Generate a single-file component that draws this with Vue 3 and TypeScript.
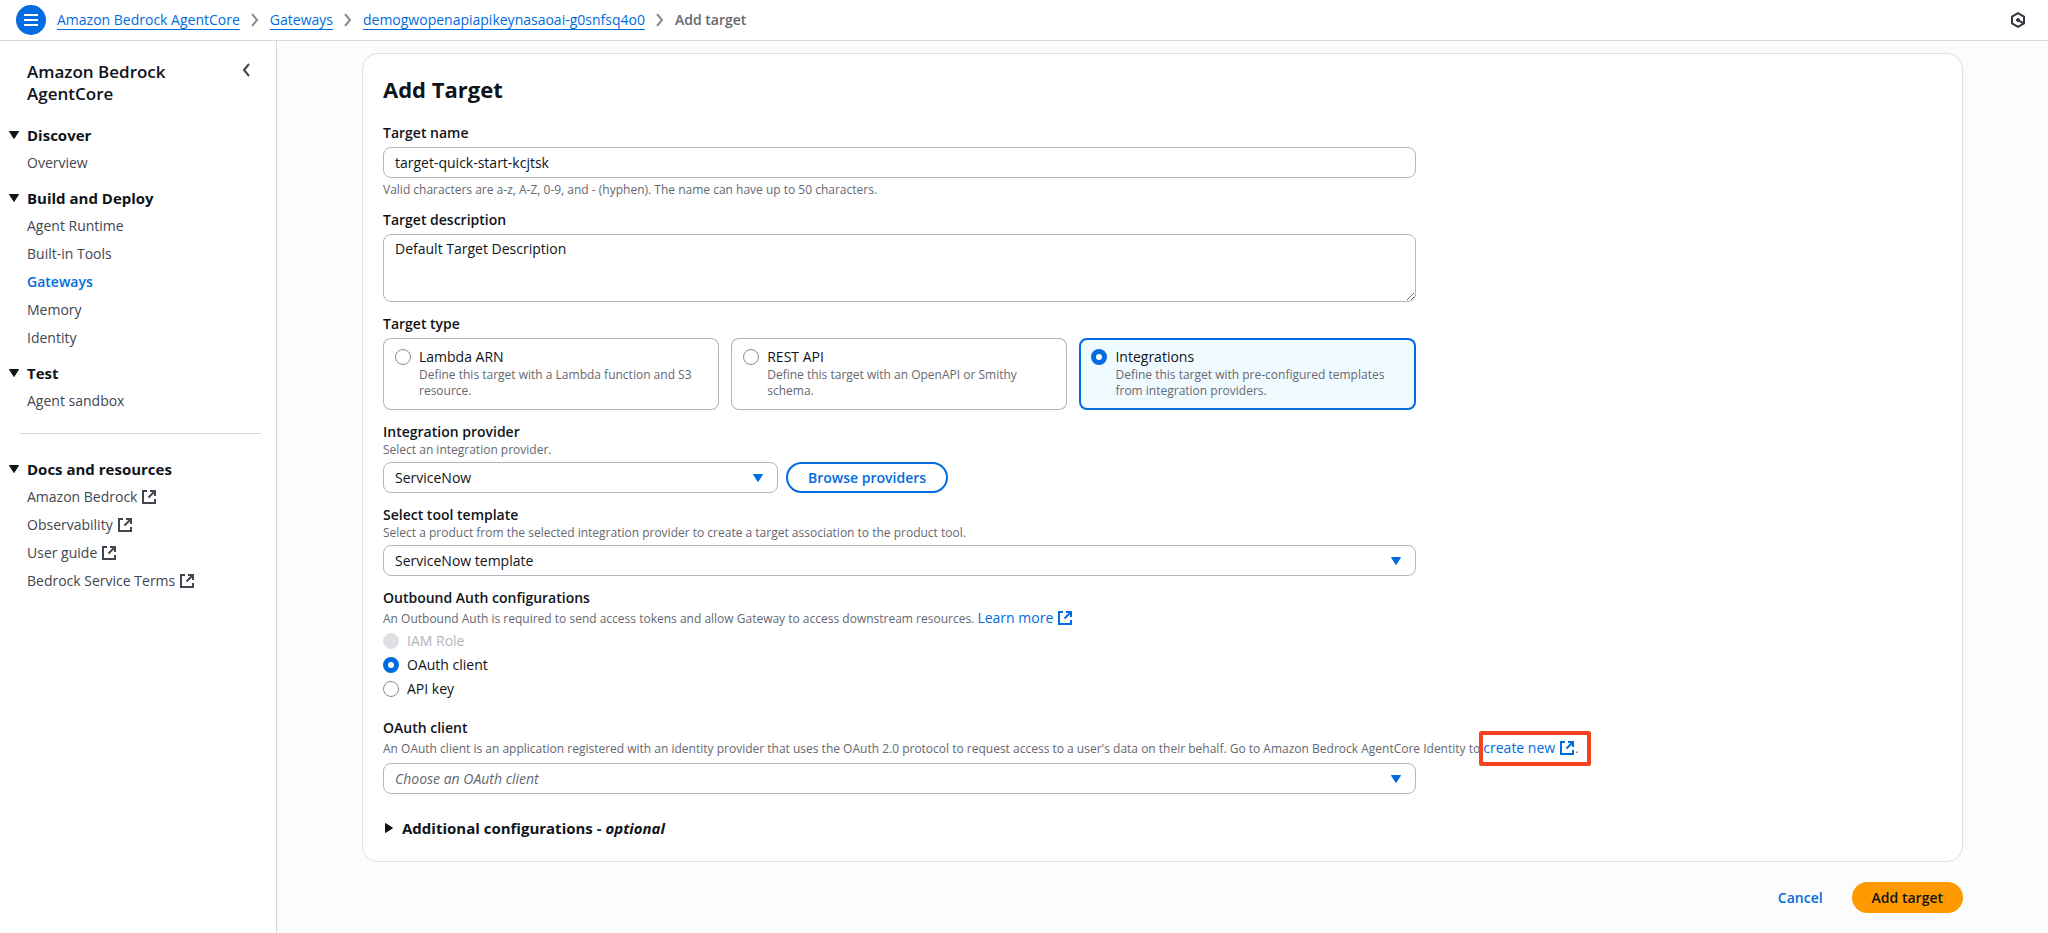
<script setup lang="ts">
import { ref, h } from 'vue'

interface NavItem { label: string; external?: boolean; active?: boolean }
interface NavSection { title: string; items: NavItem[] }

const mainSections: NavSection[] = [
  { title: 'Discover', items: [{ label: 'Overview' }] },
  {
    title: 'Build and Deploy',
    items: [
      { label: 'Agent Runtime' },
      { label: 'Built-in Tools' },
      { label: 'Gateways', active: true },
      { label: 'Memory' },
      { label: 'Identity' },
    ],
  },
  { title: 'Test', items: [{ label: 'Agent sandbox' }] },
]
const docSections: NavSection[] = [
  {
    title: 'Docs and resources',
    items: [
      { label: 'Amazon Bedrock', external: true },
      { label: 'Observability', external: true },
      { label: 'User guide', external: true },
      { label: 'Bedrock Service Terms', external: true },
    ],
  },
]
const navGroups = [mainSections, docSections]

const crumbs = ['Amazon Bedrock AgentCore', 'Gateways', 'demogwopenapiapikeynasaoai-g0snfsq4o0']

const targetTypes = [
  { id: 'lambda', title: 'Lambda ARN', text: 'Define this target with a Lambda function and S3 resource.' },
  { id: 'rest', title: 'REST API', text: 'Define this target with an OpenAPI or Smithy schema.' },
  { id: 'integrations', title: 'Integrations', text: 'Define this target with pre-configured templates from integration providers.' },
]
const authTypes = [
  { id: 'iam', label: 'IAM Role', disabled: true },
  { id: 'oauth', label: 'OAuth client', disabled: false },
  { id: 'apikey', label: 'API key', disabled: false },
]

const targetName = ref('target-quick-start-kcjtsk')
const description = ref('Default Target Description')
const targetType = ref('integrations')
const authType = ref('oauth')
const provider = ref('ServiceNow')
const template = ref('ServiceNow template')
const oauthClient = ref('')

const ExternalIcon = () =>
  h('svg', { viewBox: '0 0 16 16', width: 16, height: 16, fill: 'none', stroke: 'currentColor', 'stroke-width': 2, 'aria-hidden': 'true' }, [
    h('path', { d: 'M6 2H2v12h12v-4' }),
    h('path', { d: 'M9 2h5v5M14 2 7.500 8.500' }),
  ])
const CaretDown = () =>
  h('svg', { viewBox: '0 0 10 8', width: 10, height: 8, fill: 'currentColor', stroke: 'currentColor', 'stroke-width': 1, 'stroke-linejoin': 'round', 'aria-hidden': 'true' }, [
    h('path', { d: 'M.5.5h9L5 7.500z' }),
  ])
</script>

<template>
  <div class="page">
    <header class="topbar">
      <button class="menu" type="button" aria-label="Open menu">
        <svg viewBox="0 0 16 16" width="16" height="16" fill="none" stroke="currentColor" stroke-width="2"><path d="M1 3h14M1 8h14M1 13h14" /></svg>
      </button>
      <nav class="crumbs" aria-label="Breadcrumb">
        <template v-for="c in crumbs" :key="c">
          <a href="#">{{ c }}</a>
          <svg class="sep" viewBox="0 0 8 14" width="8" height="14" fill="none" stroke="currentColor" stroke-width="2"><path d="M1 1l5 6-5 6" /></svg>
        </template>
        <span class="current">Add target</span>
      </nav>
      <button class="assist" type="button" aria-label="Assistant">
        <svg viewBox="0 0 16 16" width="16" height="16" fill="none" stroke="currentColor" stroke-width="2">
          <path d="M8 1.200 14 4.600v6.800L8 14.800 2 11.400V4.600z" stroke-linejoin="round" />
          <path d="M8 8l5.500 3.300" />
          <circle cx="8" cy="8" r="1.500" fill="currentColor" stroke-width="1" />
        </svg>
      </button>
    </header>

    <div class="body">
      <aside class="sidebar">
        <div class="side-head">
          <h2>Amazon Bedrock AgentCore</h2>
          <button class="collapse" type="button" aria-label="Collapse navigation">
            <svg viewBox="0 0 8 14" width="8" height="14" fill="none" stroke="currentColor" stroke-width="2"><path d="M7 1 2 7l5 6" /></svg>
          </button>
        </div>
        <nav v-for="(group, i) in navGroups" :key="i" class="group">
          <section v-for="s in group" :key="s.title" class="section">
            <h3><CaretDown />{{ s.title }}</h3>
            <ul>
              <li v-for="item in s.items" :key="item.label">
                <a href="#" :class="{ active: item.active }">{{ item.label }}<ExternalIcon v-if="item.external" /></a>
              </li>
            </ul>
          </section>
        </nav>
      </aside>

      <main class="main">
        <form class="card" @submit.prevent>
          <h1>Add Target</h1>
          <div class="fields">
            <div class="field">
              <label class="label" for="name">Target name</label>
              <input id="name" v-model="targetName" class="control gap" type="text" />
              <p class="help gap">Valid characters are a-z, A-Z, 0-9, and - (hyphen). The name can have up to 50 characters.</p>
            </div>

            <div class="field">
              <label class="label" for="desc">Target description</label>
              <textarea id="desc" v-model="description" class="control area gap"></textarea>
            </div>

            <fieldset class="field">
              <legend class="label">Target type</legend>
              <div class="tiles gap">
                <label v-for="t in targetTypes" :key="t.id" class="tile" :class="{ selected: targetType === t.id }">
                  <input v-model="targetType" type="radio" name="type" :value="t.id" />
                  <span>
                    <span class="tile-title">{{ t.title }}</span>
                    <span class="help">{{ t.text }}</span>
                  </span>
                </label>
              </div>
            </fieldset>

            <div class="field">
              <label class="label" for="provider">Integration provider</label>
              <p class="help">Select an integration provider.</p>
              <div class="provider gap">
                <div class="select">
                  <select id="provider" v-model="provider" class="control"><option>ServiceNow</option></select>
                  <CaretDown />
                </div>
                <button class="btn outline" type="button">Browse providers</button>
              </div>
            </div>

            <div class="field">
              <label class="label" for="template">Select tool template</label>
              <p class="help">Select a product from the selected integration provider to create a target association to the product tool.</p>
              <div class="select gap">
                <select id="template" v-model="template" class="control"><option>ServiceNow template</option></select>
                <CaretDown />
              </div>
            </div>

            <fieldset class="field">
              <legend class="label">Outbound Auth configurations</legend>
              <p class="help tall">
                An Outbound Auth is required to send access tokens and allow Gateway to access downstream resources.
                <a href="#">Learn more<ExternalIcon /></a>
              </p>
              <div class="radios">
                <label v-for="a in authTypes" :key="a.id" class="radio" :class="{ off: a.disabled }">
                  <input v-model="authType" type="radio" name="auth" :value="a.id" :disabled="a.disabled" />{{ a.label }}
                </label>
              </div>
            </fieldset>

            <div class="field">
              <label class="label" for="oauth">OAuth client</label>
              <p class="help tall">
                An OAuth client is an application registered with an identity provider that uses the OAuth 2.0 protocol to request access to a user's data on their behalf. Go to Amazon Bedrock AgentCore Identity to
                <span class="marked"><a href="#">create new<ExternalIcon /></a>.</span>
              </p>
              <div class="select gap">
                <select id="oauth" v-model="oauthClient" class="control placeholder"><option value="">Choose an OAuth client</option></select>
                <CaretDown />
              </div>
            </div>
          </div>

          <button class="expander" type="button" aria-expanded="false">
            <svg viewBox="0 0 8 10" width="8" height="10" fill="currentColor" stroke="currentColor" stroke-linejoin="round"><path d="M.5.5v9L7.500 5z" /></svg>
            <span>Additional configurations - <em>optional</em></span>
          </button>
        </form>

        <div class="actions">
          <button class="btn link" type="button">Cancel</button>
          <button class="btn primary" type="button">Add target</button>
        </div>
      </main>
    </div>
  </div>
</template>

<style>
body {
  margin: 0;
}
</style>

<style scoped>
.page {
  min-height: 100vh;
  display: flex;
  flex-direction: column;
  background: #fcfcfd;
  color: #0f141a;
  font: 14px/20px "Open Sans", "Noto Sans", sans-serif;
}
.page *,
.page *::before,
.page *::after {
  box-sizing: border-box;
}
h1, h2, h3, p, ul, fieldset {
  margin: 0;
  padding: 0;
  border: 0;
  min-width: 0;
}
legend {
  padding: 0;
}
button, input, select, textarea {
  font: inherit;
  color: inherit;
  margin: 0;
}
button {
  padding: 0;
  border: 0;
  background: none;
  cursor: pointer;
}
a {
  color: #006ce0;
  text-decoration: none;
}
.topbar {
  display: flex;
  align-items: center;
  height: 41px;
  padding: 0 22px 0 16px;
  background: #fff;
  border-bottom: 1px solid #d5d7db;
}
.menu {
  display: grid;
  place-items: center;
  width: 30px;
  height: 30px;
  border-radius: 50%;
  background: #006ce0;
  color: #fff;
}
.crumbs {
  display: flex;
  align-items: center;
  gap: 11px;
  margin-left: 11px;
}
.crumbs a {
  text-decoration: underline;
  text-decoration-thickness: 1px;
  text-underline-offset: 4px;
}
.sep {
  color: #8c8c94;
}
.current {
  color: #656871;
  font-weight: 600;
}
.assist {
  margin-left: auto;
  height: 16px;
  color: #333843;
}
.body {
  flex: 1;
  display: flex;
}
.sidebar {
  flex: none;
  width: 277px;
  padding: 20px 15px 20px 20px;
  background: #fff;
  border-right: 1px solid #d5d7db;
}
.side-head {
  display: flex;
  align-items: flex-start;
  justify-content: space-between;
  padding: 0 11px 19px 7px;
}
h2 {
  max-width: 180px;
  font-size: 17px;
  line-height: 22px;
  font-weight: 600;
}
.collapse {
  height: 22px;
  color: #424650;
}
.group + .group {
  margin-top: 22px;
  padding-top: 24px;
  border-top: 1px solid #d5d7db;
}
.section + .section {
  margin-top: 14px;
}
h3 {
  display: flex;
  align-items: center;
  gap: 8px;
  margin-left: -11px;
  font-size: 15px;
  line-height: 22px;
  font-weight: 700;
}
ul {
  display: grid;
  gap: 8px;
  margin-top: 7px;
  padding-left: 7px;
  list-style: none;
}
li a {
  display: flex;
  align-items: center;
  gap: 4px;
  color: #424650;
}
li a.active {
  color: #006ce0;
  font-weight: 600;
}
.main {
  flex: 1;
  min-width: 0;
  padding: 12px 85px 20px;
}
.card {
  padding: 19px 20px 21px;
  background: #fff;
  border: 1px solid #dedfe3;
  border-radius: 16px;
}
h1 {
  font-size: 22px;
  line-height: 32px;
  font-weight: 700;
}
.fields {
  display: grid;
  gap: 12px;
  width: calc((100% + 20px) * 2 / 3 - 20px);
  margin-top: 18px;
}
.field {
  min-width: 0;
}
.label {
  display: block;
  font-weight: 600;
}
.gap {
  margin-top: 4px;
}
.control {
  display: block;
  width: 100%;
  height: 31px;
  padding: 0 11px;
  border: 1px solid #b4b4bb;
  border-radius: 8px;
  background: #fff;
}
.area {
  height: 68px;
  padding-top: 4px;
}
.help {
  display: block;
  color: #656871;
  font-size: 12px;
  line-height: 16px;
}
.tall {
  line-height: 20px;
  white-space: nowrap;
}
.tall a {
  font-size: 14px;
}
.tall svg {
  margin-left: 4px;
  vertical-align: -3px;
}
.tiles {
  display: grid;
  grid-template-columns: repeat(3, 1fr);
  gap: 12px;
}
.tile {
  display: flex;
  gap: 8px;
  padding: 9px 12px 11px;
  border-radius: 8px;
  box-shadow: inset 0 0 0 1px #b4b4bb;
}
.tile.selected {
  background: #f0fbff;
  box-shadow: inset 0 0 0 2px #006ce0;
}
.tile-title {
  display: block;
}
input[type="radio"] {
  flex: none;
  appearance: none;
  width: 16px;
  height: 16px;
  margin-top: 2px;
  border: 1px solid #8c8c94;
  border-radius: 50%;
  background: #fff;
}
input[type="radio"]:checked {
  border: 5px solid #006ce0;
}
input[type="radio"]:disabled {
  border-color: #dedee3;
  background: #dedee3;
}
.provider {
  display: flex;
  gap: 8px;
}
.provider .select {
  width: 395px;
}
.select {
  display: grid;
  align-items: center;
}
.select > * {
  grid-area: 1 / 1;
}
.select select {
  appearance: none;
  padding-right: 36px;
}
.select svg {
  justify-self: end;
  margin-right: 15px;
  color: #006ce0;
  pointer-events: none;
}
.select .placeholder {
  color: #656871;
  font-style: italic;
}
.radios {
  display: grid;
  gap: 4px;
  padding: 2px 0 7px;
}
.radio {
  display: flex;
  gap: 8px;
}
.off {
  color: #b4b4bb;
}
.marked {
  position: relative;
}
.marked::after {
  content: "";
  position: absolute;
  inset: -9px -13px -9px -4px;
  border: 4px solid #f5431f;
  border-radius: 2px;
  pointer-events: none;
}
.expander {
  display: flex;
  align-items: center;
  gap: 9px;
  margin-top: 22px;
  padding: 0 2px;
  font-size: 15px;
  line-height: 24px;
  font-weight: 700;
}
.actions {
  display: flex;
  justify-content: flex-end;
  gap: 9px;
  margin-top: 20px;
}
.btn {
  height: 31px;
  padding: 0 20px;
  border-radius: 16px;
  font-weight: 600;
}
.outline {
  border: 2px solid #006ce0;
  background: #fff;
  color: #006ce0;
}
.link {
  color: #006ce0;
}
.primary {
  background: #ff9900;
}
</style>
